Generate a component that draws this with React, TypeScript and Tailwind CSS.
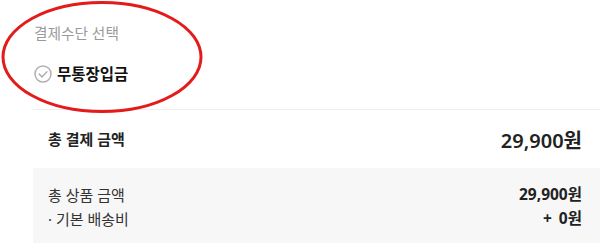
import React from "react";

export default function App() {
  return (
    <div
      className="relative w-[600px] h-[248px] overflow-hidden bg-white text-[#222]"
      style={{ fontFamily: '"Noto Sans", "Noto Sans CJK KR", sans-serif' }}
    >
      <div className="pl-[33px]">
        <div className="pt-[23px] pl-px">
          <div className="h-[20px] leading-[20px] text-[14.7px] text-[#9a9a9a]">결제수단 선택</div>
          <div className="mt-[21px] flex items-center h-[20px] gap-[5px]">
            <svg width="18" height="18" viewBox="0 0 18 18" className="shrink-0">
              <circle cx="9" cy="9" r="8" fill="none" stroke="#b0b0b0" strokeWidth="1.5" />
              <path d="M5.2 9.1 L8 11.9 L12.9 6.7" fill="none" stroke="#b0b0b0" strokeWidth="1.5" strokeLinecap="round" strokeLinejoin="round" />
            </svg>
            <span className="text-[15.5px] font-bold leading-[20px] text-[#111]">무통장입금</span>
          </div>
        </div>
        <div className="mt-[25px] border-t border-[#eeeeee]">
          <div className="h-[58px] flex items-center justify-between pl-[15px] pr-[18px]">
            <span className="text-[15px] font-bold">총 결제 금액</span>
            <span className="text-[20px] font-semibold mt-[4px]">29,900원</span>
          </div>
          <div className="h-[75px] bg-[#f7f7f7] pt-[15px] pl-[15px] pr-[18px]">
            <div className="flex justify-between h-[24px] items-center">
              <span className="text-[15px] text-[#333]">총 상품 금액</span>
              <span className="text-[15.5px] font-bold">29,900원</span>
            </div>
            <div className="flex justify-between h-[24px] items-center">
              <span className="text-[15px] text-[#333]">· 기본 배송비</span>
              <span className="text-[15.5px] font-bold">
                <span className="mr-[3px]">+</span> 0원
              </span>
            </div>
          </div>
        </div>
      </div>
      <svg
        className="absolute left-0 top-0 pointer-events-none"
        width="210"
        height="120"
        viewBox="0 0 210 120"
      >
        <ellipse cx="102" cy="57" rx="99" ry="54.5" fill="none" stroke="#e31b1b" strokeWidth="3" />
      </svg>
    </div>
  );
}
